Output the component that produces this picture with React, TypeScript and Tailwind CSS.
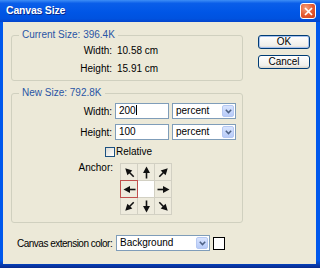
import React from 'react'

const dirs = [
  '-rotate-135',
  '-rotate-90',
  '-rotate-45',
  'rotate-180',
  '',
  'rotate-0',
  'rotate-135',
  'rotate-90',
  'rotate-45',
]

function Arrow({ rot }: { rot: string }) {
  return (
    <svg width="13" height="13" viewBox="0 0 13 13" className={rot}>
      <path d="M0.5 6.5H7.5" stroke="#111" strokeWidth="1.6" />
      <path d="M6 3L12.5 6.5L6 10Z" fill="#111" />
    </svg>
  )
}

function Select({ value, w }: { value: string; w: string }) {
  return (
    <div className={`flex items-center h-[16px] border border-[#7f9db9] bg-white ${w}`}>
      <span className="flex-1 pl-[3px] leading-[14px]">{value}</span>
      <span className="w-[12px] h-[12px] mr-px rounded-[2px] bg-[linear-gradient(#d8e4fe,#b7cbf8)] border border-[#b5c8f2] flex items-center justify-center">
        <svg width="7" height="5" viewBox="0 0 7 5">
          <path d="M0.8 0.8L3.5 3.6L6.2 0.8" stroke="#4d6185" strokeWidth="1.5" fill="none" />
        </svg>
      </span>
    </div>
  )
}

function Legend({ text }: { text: string }) {
  return (
    <div className="-mt-[7px] ml-[7px] px-[3px] w-fit bg-[#ece9d8] text-[#2a55a5] leading-[12px]">{text}</div>
  )
}

export default function App() {
  return (
    <div className="w-[320px] h-[268px] flex flex-col bg-[linear-gradient(to_bottom,#0058ec_0%,#0058ec_97%,#0a2a8a_100%)] font-['Tahoma','Liberation_Sans',sans-serif] text-[10px] text-black">
      <div className="h-[22px] shrink-0 flex items-center justify-between pl-[6px] pr-[4px] bg-[linear-gradient(to_bottom,#3d8ef6_0%,#0a5ee9_15%,#0056e6_55%,#0052df_85%,#0444cc_100%)]">
        <span className="text-white font-bold text-[10.5px] tracking-[-0.2px] [text-shadow:1px_1px_0_#0a2a8a]">Canvas Size</span>
        <span className="w-[16px] h-[16px] rounded-[3px] border border-white bg-[radial-gradient(circle_at_35%_30%,#f3a07c,#e4582f_55%,#cc3e1a)] flex items-center justify-center">
          <svg width="9" height="9" viewBox="0 0 9 9">
            <path d="M1 1L8 8M8 1L1 8" stroke="#fff" strokeWidth="1.7" />
          </svg>
        </span>
      </div>

      <div className="flex-1 mx-[3px] mb-[4px] mr-[4px] bg-[#ece9d8] flex flex-col">
        <div className="flex">
          <div className="ml-[8px] w-[232px]">
            <div className="mt-[13px] h-[46px] border border-[#d0d0bf] rounded-[3px]">
              <Legend text="Current Size: 396.4K" />
              <div className="mt-[3px] flex flex-col gap-[4px] leading-[14px]">
                <div className="flex gap-[5px]">
                  <span className="w-[100px] text-right">Width:</span>
                  <span>10.58 cm</span>
                </div>
                <div className="flex gap-[5px]">
                  <span className="w-[100px] text-right">Height:</span>
                  <span>15.91 cm</span>
                </div>
              </div>
            </div>

            <div className="mt-[12px] h-[130px] border border-[#d0d0bf] rounded-[3px]">
              <Legend text="New Size: 792.8K" />
              <div className="mt-[4px] flex flex-col gap-[5px]">
                <div className="flex items-center">
                  <span className="w-[100px] text-right">Width:</span>
                  <div className="ml-[3px] w-[54px] h-[16px] border border-[#7f9db9] bg-white pl-[3px] leading-[14px]">
                    200<span className="inline-block w-px h-[10px] bg-black align-[-1px]" />
                  </div>
                  <Select value="percent" w="w-[64px] ml-[3px]" />
                </div>
                <div className="flex items-center">
                  <span className="w-[100px] text-right">Height:</span>
                  <div className="ml-[3px] w-[54px] h-[16px] border border-[#7f9db9] bg-white pl-[3px] leading-[14px]">100</div>
                  <Select value="percent" w="w-[64px] ml-[3px]" />
                </div>
              </div>
              <div className="mt-[6px] ml-[93px] flex items-center gap-px leading-[12px]">
                <span className="w-[10px] h-[10px] border border-[#1c5180] bg-[linear-gradient(135deg,#dcdcd7,#fff)]" />
                <span>Relative</span>
              </div>
              <div className="mt-[5px] flex">
                <span className="w-[101px] text-right leading-[10px]">Anchor:</span>
                <div className="ml-[7px] grid grid-cols-[repeat(3,16px)] grid-rows-[repeat(3,16px)] gap-px p-px bg-[#d2d0c3]">
                  {dirs.map((d, i) =>
                    i === 4 ? (
                      <div key={i} className="bg-white" />
                    ) : (
                      <div
                        key={i}
                        className={`flex items-center justify-center bg-[#eeebdd] ${i === 3 ? 'shadow-[0_0_0_1px_#c0504d] relative' : ''}`}
                      >
                        <Arrow rot={d} />
                      </div>
                    ),
                  )}
                </div>
              </div>
            </div>
          </div>

          <div className="ml-[15px] mt-[13px] flex flex-col gap-[6px]">
            <button className="w-[52px] h-[14px] rounded-[3px] border border-[#003c74] bg-[linear-gradient(#ffffff,#f0efea_80%,#d8d3c8)] shadow-[inset_0_0_0_1px_#a7c2ef] leading-none">OK</button>
            <button className="w-[52px] h-[14px] rounded-[3px] border border-[#003c74] bg-[linear-gradient(#ffffff,#f0efea_80%,#d8d3c8)] leading-none">Cancel</button>
          </div>
        </div>

        <div className="mt-[12px] ml-[14px] flex items-center">
          <span className="w-[91px] whitespace-nowrap tracking-[-0.5px]">Canvas extension color:</span>
          <Select value="Background" w="w-[94px] ml-[8px] h-[15px]" />
          <span className="ml-[3px] w-[12px] h-[13px] border border-black bg-white" />
        </div>
      </div>
    </div>
  )
}
